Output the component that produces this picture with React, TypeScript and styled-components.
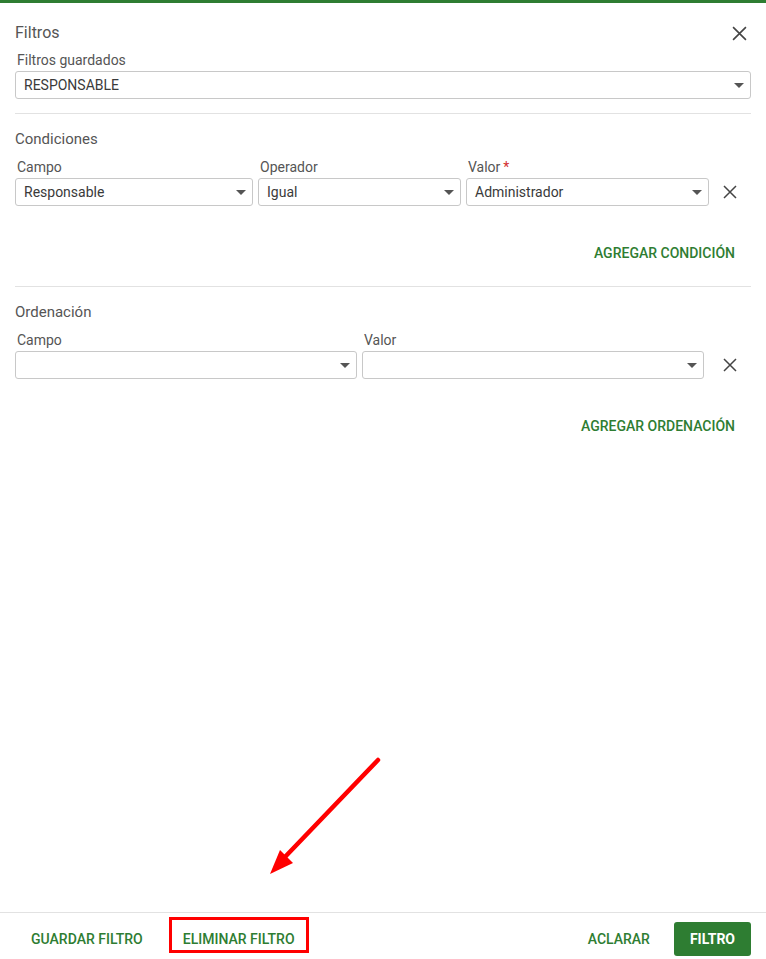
import React from "react";
import styled, { createGlobalStyle } from "styled-components";

const GlobalStyle = createGlobalStyle`
  html, body { margin: 0; padding: 0; background: #fff; }
  body { font-family: Roboto, "Noto Sans", Arial, sans-serif; color: #333; }
  * { box-sizing: border-box; }
`;

const GREEN = "#2e7d32";

const Dialog = styled.div`
  position: relative;
  height: 100vh;
  display: flex;
  flex-direction: column;
  border-top: 3px solid ${GREEN};
  background: #fff;
`;

const Body = styled.div`
  flex: 1;
  padding: 0 15px;
  display: flex;
  flex-direction: column;
`;

const Header = styled.div`
  display: flex;
  align-items: center;
  justify-content: space-between;
  padding-top: 20px;
  height: 40px;
`;

const Title = styled.div`
  font-size: 16px;
  line-height: 20px;
  color: #555;
`;

const IconButton = styled.button`
  border: 0;
  background: none;
  padding: 0;
  width: 24px;
  height: 20px;
  display: flex;
  align-items: center;
  justify-content: center;
  cursor: pointer;
  color: #444;
`;

const Label = styled.div`
  font-size: 14px;
  line-height: 18px;
  color: #555;
  padding-left: 2px;
  margin-bottom: 2px;
`;

const Required = styled.span`
  color: #d32f2f;
  margin-left: 3px;
`;

const SelectBox = styled.div`
  height: 28px;
  border: 1px solid #c8c8c8;
  border-radius: 3px;
  display: flex;
  align-items: center;
  justify-content: space-between;
  padding: 0 6px 0 8px;
  font-size: 14px;
  color: #3a3a3a;
  background: #fff;
`;

const Caret = styled.span`
  width: 0;
  height: 0;
  border-left: 5px solid transparent;
  border-right: 5px solid transparent;
  border-top: 5px solid #555;
  margin-top: 1px;
`;

const Divider = styled.div<{ $top: number }>`
  height: 1px;
  background: #e2e2e2;
  margin-top: ${(p) => p.$top}px;
`;

const SectionTitle = styled.div`
  font-size: 15px;
  line-height: 20px;
  color: #555;
  margin-top: 15px;
  margin-bottom: 9px;
`;

const Row = styled.div<{ $cols: string }>`
  display: grid;
  grid-template-columns: ${(p) => p.$cols};
  column-gap: 5px;
  align-items: end;
`;

const Field = styled.div`
  display: flex;
  flex-direction: column;
`;

const RemoveCell = styled.div`
  height: 28px;
  display: flex;
  align-items: center;
  justify-content: center;
`;

const Actions = styled.div`
  display: flex;
  justify-content: flex-end;
  margin-top: 29px;
`;

const TextButton = styled.button`
  border: 0;
  background: none;
  height: 36px;
  padding: 0 16px;
  font-family: Roboto, Arial, sans-serif;
  font-size: 14px;
  font-weight: 500;
  color: ${GREEN};
  text-transform: uppercase;
  cursor: pointer;
  white-space: nowrap;
`;

/* Footer action highlighted with a red frame */
const MarkedButton = styled(TextButton)`
  border: 3px solid #ff0000;
  padding: 8px 11px 0;
  height: 36px;
  margin-left: 10px;
  margin-bottom: 8px;
`;

const Footer = styled.div`
  height: 47px;
  border-top: 1px solid #e2e2e2;
  display: flex;
  align-items: center;
  padding: 6px 15px 0;
`;

const FooterLeft = styled.div`
  display: flex;
  align-items: center;
  flex: 1;
`;

const FooterRight = styled.div`
  display: flex;
  align-items: center;
  gap: 8px;
`;

const PrimaryButton = styled.button`
  border: 0;
  height: 34px;
  padding: 0 16px;
  border-radius: 3px;
  background: ${GREEN};
  color: #fff;
  font-family: Roboto, Arial, sans-serif;
  font-size: 14px;
  font-weight: 700;
  cursor: pointer;
`;

const ArrowOverlay = styled.svg`
  position: absolute;
  left: 0;
  top: 0;
  pointer-events: none;
`;

const CloseIcon = ({ size = 14 }: { size?: number }) => (
  <svg width={size} height={size} viewBox="0 0 14 14">
    <path d="M1 1 L13 13 M13 1 L1 13" stroke="#444" strokeWidth="1.5" fill="none" />
  </svg>
);

const Select = ({ value = "" }: { value?: string }) => (
  <SelectBox>
    <span>{value}</span>
    <Caret />
  </SelectBox>
);

export default function App() {
  return (
    <>
      <GlobalStyle />
      <Dialog>
        <Body>
          <Header>
            <Title>Filtros</Title>
            <IconButton aria-label="Cerrar">
              <CloseIcon size={15} />
            </IconButton>
          </Header>
          <Label style={{ marginTop: 8 }}>Filtros guardados</Label>
          <Select value="RESPONSABLE" />

          <Divider $top={14} />
          <SectionTitle>Condiciones</SectionTitle>
          <Row $cols="238px 203px 243px 32px">
            <Field>
              <Label>Campo</Label>
              <Select value="Responsable" />
            </Field>
            <Field>
              <Label>Operador</Label>
              <Select value="Igual" />
            </Field>
            <Field>
              <Label>
                Valor<Required>*</Required>
              </Label>
              <Select value="Administrador" />
            </Field>
            <RemoveCell>
              <CloseIcon />
            </RemoveCell>
          </Row>
          <Actions>
            <TextButton>Agregar condición</TextButton>
          </Actions>

          <Divider $top={15} />
          <SectionTitle>Ordenación</SectionTitle>
          <Row $cols="342px 342px 42px">
            <Field>
              <Label>Campo</Label>
              <Select />
            </Field>
            <Field>
              <Label>Valor</Label>
              <Select />
            </Field>
            <RemoveCell>
              <CloseIcon />
            </RemoveCell>
          </Row>
          <Actions>
            <TextButton>Agregar ordenación</TextButton>
          </Actions>
        </Body>

        <Footer>
          <FooterLeft>
            <TextButton>Guardar filtro</TextButton>
            <MarkedButton>Eliminar filtro</MarkedButton>
          </FooterLeft>
          <FooterRight>
            <TextButton>Aclarar</TextButton>
            <PrimaryButton>FILTRO</PrimaryButton>
          </FooterRight>
        </Footer>

        <ArrowOverlay width="766" height="959" viewBox="0 0 766 959">
          <line x1="378" y1="757" x2="284" y2="855" stroke="#ff0000" strokeWidth="4.5" strokeLinecap="round" />
          <polygon points="270,871 280,847 293,860" fill="#ff0000" />
        </ArrowOverlay>
      </Dialog>
    </>
  );
}
